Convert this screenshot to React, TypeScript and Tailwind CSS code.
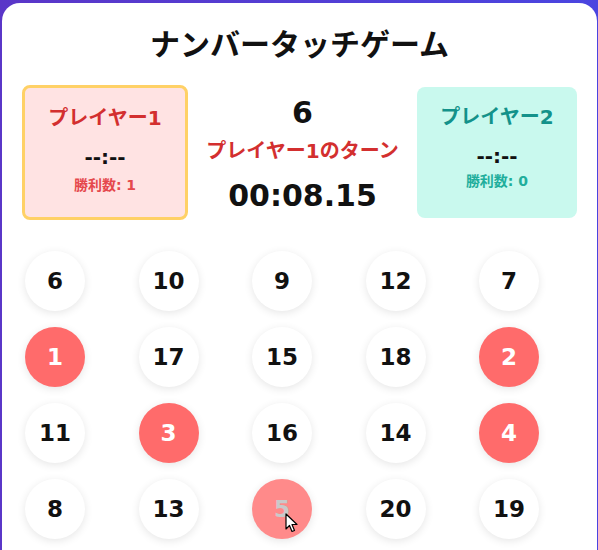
import React from 'react';

const FONT = "font-['DejaVu_Sans','Noto_Sans_CJK_JP',sans-serif]";

const numbers: { n: number; state: 'idle' | 'done' | 'hover' }[] = [
  { n: 6, state: 'idle' },
  { n: 10, state: 'idle' },
  { n: 9, state: 'idle' },
  { n: 12, state: 'idle' },
  { n: 7, state: 'idle' },
  { n: 1, state: 'done' },
  { n: 17, state: 'idle' },
  { n: 15, state: 'idle' },
  { n: 18, state: 'idle' },
  { n: 2, state: 'done' },
  { n: 11, state: 'idle' },
  { n: 3, state: 'done' },
  { n: 16, state: 'idle' },
  { n: 14, state: 'idle' },
  { n: 4, state: 'done' },
  { n: 8, state: 'idle' },
  { n: 13, state: 'idle' },
  { n: 5, state: 'hover' },
  { n: 20, state: 'idle' },
  { n: 19, state: 'idle' },
];

const Cursor: React.FC = () => (
  <svg className="absolute left-[33px] top-[34px]" width="14" height="20" viewBox="0 0 14 20">
    <path d="M1 1 L1 16 L4.5 12.5 L7 18.5 L9.5 17.5 L7 11.5 L12 11.5 Z" fill="#fff" stroke="#000" strokeWidth="1.2" strokeLinejoin="round" />
  </svg>
);

const App: React.FC = () => {
  return (
    <div className={`h-[550px] overflow-hidden bg-gradient-to-r from-[#5a36c8] to-[#4a45e0] pt-[3px] pl-[2px] pr-[1px] ${FONT}`}>
      <div className="bg-white rounded-[18px] px-5 pt-6 h-[600px]">
        <h1 className="text-center text-[30px] leading-[36px] font-bold text-[#111]">ナンバータッチゲーム</h1>

        <div className="mt-[22px] flex items-center justify-between">
          <div className="w-[166px] h-[135px] rounded-lg border-[3px] border-[#ffd166] bg-[#ffe3e3] flex flex-col items-center pt-[16px]">
            <div className="text-xl leading-7 font-bold text-[#d32f2f]">プレイヤー1</div>
            <div className="mt-[11px] text-xl leading-7 font-bold text-[#111]">--:--</div>
            <div className="mt-[4px] text-[14px] leading-5 font-bold text-[#e5484d]">勝利数: 1</div>
          </div>

          <div className="flex flex-col items-center pt-[3px]">
            <div className="text-[30px] leading-9 font-bold text-[#111]">6</div>
            <div className="mt-[6px] text-xl leading-7 font-bold text-[#d32f2f]">プレイヤー1のターン</div>
            <div className="mt-[13px] text-[30px] leading-9 font-bold text-[#111]">00:08.15</div>
          </div>

          <div className="w-[160px] h-[131px] rounded-lg bg-[#c9f9ee] flex flex-col items-center pt-4">
            <div className="text-xl leading-7 font-bold text-[#13928a]">プレイヤー2</div>
            <div className="mt-[11px] text-xl leading-7 font-bold text-[#111]">--:--</div>
            <div className="mt-[1px] text-[14px] leading-5 font-bold text-[#1fae9c]">勝利数: 0</div>
          </div>
        </div>

        <div className="mt-[31px] ml-[3px] grid grid-cols-[repeat(5,60px)] gap-x-[53.5px] gap-y-4">
          {numbers.map(({ n, state }) => (
            <div
              key={n}
              className={`relative w-[60px] h-[60px] rounded-full flex items-center justify-center text-[23px] font-bold shadow-[0_2px_8px_rgba(0,0,0,0.1)] ${
                state === 'done'
                  ? 'bg-[#ff6b6b] text-white'
                  : state === 'hover'
                  ? 'bg-[#ff8a8a] text-[#c9c9c9]'
                  : 'bg-white text-[#111]'
              }`}
            >
              {n}
              {state === 'hover' && <Cursor />}
            </div>
          ))}
        </div>
      </div>
    </div>
  );
};

export default App;
